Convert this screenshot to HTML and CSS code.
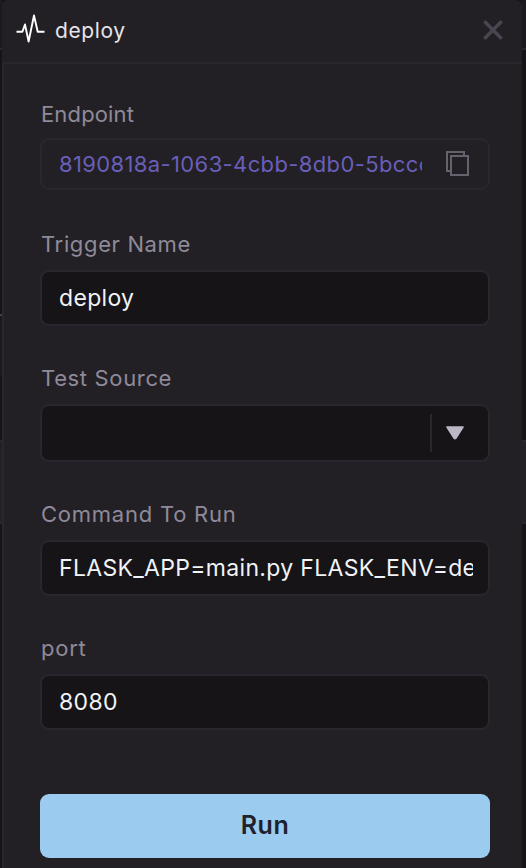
FILE: index.html
```html
<!DOCTYPE html>
<html lang="en">
<head>
<meta charset="utf-8">
<title>deploy</title>
<link rel="stylesheet" href="styles.css">
</head>
<body>
<div class="stage">
  <div class="rail rail-left"></div>
  <main class="panel">
    <header class="head">
      <svg class="pulse" width="30" height="32" viewBox="0 0 30 32"><path d="M0.5 18.8H6.4L9 11.5L12.6 28.5L18 2.5L21.7 18.8H28.5" fill="none" stroke="#fff" stroke-width="1.9" stroke-linejoin="round"/></svg>
      <h1 class="title">deploy</h1>
      <svg class="close" width="20" height="20" viewBox="0 0 20 20"><path d="M1.3 1.3L18.7 18.7M18.7 1.3L1.3 18.7" stroke="#484650" stroke-width="3.4"/></svg>
    </header>
    <div class="body">
      <div class="field endpoint">
        <label class="label">Endpoint</label>
        <div class="box link"><span class="value">8190818a-1063-4cbb-8db0-5bccc</span>
          <svg class="copy" width="23" height="25" viewBox="0 0 23 25"><path d="M5 20H1V1H18V5M5 5H22V24H5Z" fill="none" stroke="#65626d" stroke-width="2"/></svg>
        </div>
      </div>
      <div class="field trigger">
        <label class="label">Trigger Name</label>
        <div class="box"><span class="value">deploy</span></div>
      </div>
      <div class="field source">
        <label class="label">Test Source</label>
        <div class="box select"><span class="divider"></span>
          <svg class="arrow" width="20" height="14" viewBox="0 0 20 14"><path d="M2 1H18L10.8 12.2Q10 13.2 9.2 12.2Z" fill="#bcb8c6" stroke="#bcb8c6" stroke-width="1.6" stroke-linejoin="round"/></svg>
        </div>
      </div>
      <div class="field command">
        <label class="label">Command To Run</label>
        <div class="box"><span class="value">FLASK_APP=main.py FLASK_ENV=de</span></div>
      </div>
      <div class="field port">
        <label class="label">port</label>
        <div class="box"><span class="value">8080</span></div>
      </div>
      <button class="run">Run</button>
    </div>
  </main>
  <div class="rail rail-right"></div>
</div>
</body>
</html>
```
FILE: styles.css
```css
* { box-sizing: border-box; }
body { margin: 0; background: #151417; font-family: Inter, "Liberation Sans", sans-serif; }
.stage { display: flex; width: 526px; height: 868px; overflow: hidden; }
.rail-left {
  width: 2px;
  background: linear-gradient(#1b1a1e 48px, #29272d 48px 50px, #151417 50px 314px, #45424c 314px 316px, #1b1a1e 316px 376px, #151417 376px 440px, #29272d 440px 442px, #222125 442px 522px, #29272d 522px 524px, #151417 524px);
}
.rail-right {
  width: 4px;
  background: linear-gradient(#1b1a1e 48px, #29272d 48px 50px, #151417 50px 440px, #29272d 440px 442px, #222125 442px 522px, #29272d 522px 524px, #151417 524px);
}
.panel { width: 520px; background: #222025; border-radius: 6px 6px 0 0; }
.head { display: flex; align-items: center; height: 64px; padding: 0 18px 2px 14px; border-bottom: 2px solid #29272d; }
.pulse { margin-bottom: 2px; }
.title { flex: 1; margin: 1px 0 0 9px; color: #e6e4ea; font-size: 21px; line-height: 28px; font-weight: 400; letter-spacing: 0.6px; }
.close { margin: 0 1px 1px 0; }
.body { height: 804px; padding: 36px 32px 0 36px; border-left: 2px solid #29272d; }
.label { display: block; height: 30px; padding-left: 1px; color: #8f8a99; font-size: 22px; line-height: 30px; letter-spacing: 0.65px; white-space: nowrap; }
.box { display: flex; align-items: center; width: 450px; height: 56px; margin-top: 11px; padding: 0 15px 0 17px; background: #161417; border: 2px solid #29272d; border-radius: 9px; color: #f1f3f6; }
.value { flex: 1; overflow: hidden; white-space: nowrap; font-size: 23px; line-height: 32px; letter-spacing: 0.32px; }
.endpoint .box { height: 52px; margin-top: 8px; }
.endpoint .label { line-height: 28px; letter-spacing: 0.15px; }
.link { background: transparent; color: #695eb8; }
.link .value { flex: none; width: 363px; font-size: 22px; letter-spacing: 0.37px; }
.copy { margin: 0 0 2px 24px; }
.trigger { margin-top: 39px; }
.source { margin-top: 37px; }
.source .box { height: 58px; }
.select { justify-content: flex-end; padding-right: 23px; }
.divider { width: 2px; height: 38px; margin-right: 13px; background: #29272d; }
.command { margin-top: 37px; }
.command .label, .port .label { letter-spacing: 0.76px; }
.port { margin-top: 37px; }
.run { display: block; width: 450px; height: 64px; margin: 64px 0 0; padding: 0 0 2px; border: 0; border-radius: 9px; background: #9bcbef; color: #20222b; font-family: inherit; font-size: 25px; font-weight: 600; letter-spacing: 0.6px; }
```
